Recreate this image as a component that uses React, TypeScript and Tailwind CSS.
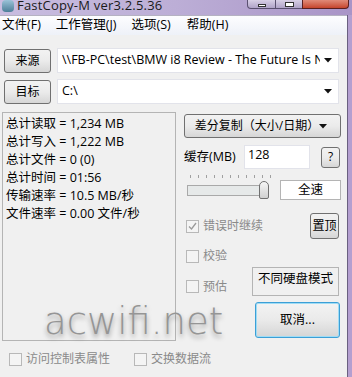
import React from 'react';

const font = "font-['Open_Sans','Noto_Sans_CJK_SC',sans-serif]";

function Arrow() {
    return (
        <svg width="8" height="5" viewBox="0 0 8 5" className="shrink-0">
            <path d="M0 0 H8 L4 4.5 Z" fill="#111" />
        </svg>
    );
}

function Check({ label, checked = false, className = '' }: { label: string; checked?: boolean; className?: string }) {
    return (
        <div className={`flex items-center gap-[4px] text-[12px] text-[#8a8a8a] ${className}`}>
            <div className="w-[13px] h-[13px] shrink-0 border border-[#b8b8b8] bg-[#f4f4f4] flex items-center justify-center">
                {checked && (
                    <svg width="9" height="9" viewBox="0 0 9 9">
                        <path d="M1 4.5 L3.5 7 L8 1" stroke="#9a9a9a" strokeWidth="1.3" fill="none" />
                    </svg>
                )}
            </div>
            <span className="whitespace-nowrap">{label}</span>
        </div>
    );
}

const btn = 'shrink-0 border border-[#707070] rounded-[3px] bg-gradient-to-b from-[#f2f2f2] via-[#ebebeb] to-[#d6d6d6] flex items-center justify-center text-[12px] text-black';

const stats = [
    '总计读取 = 1,234 MB',
    '总计写入 = 1,222 MB',
    '总计文件 = 0 (0)',
    '总计时间 = 01:56',
    '传输速率 = 10.5 MB/秒',
    '文件速率 = 0.00 文件/秒',
];

export default function App() {
    return (
        <div className={`w-[352px] h-[377px] overflow-hidden flex flex-col bg-[#b7a6d2] relative ${font}`}>
            {/* title bar */}
            <div className="h-[15px] shrink-0 flex items-end relative bg-gradient-to-r from-[#c9bde0] via-[#bcaed6] to-[#a994c7]">
                <div className="w-[12px] h-[12px] ml-[2px] mb-[3px] rounded-sm bg-gradient-to-b from-[#9bc3d8] to-[#4d7f99]" />
                <span className="ml-[3px] text-[13px] leading-[15px] tracking-[0.2px] text-[#1a1a1a] -translate-y-[2px] whitespace-nowrap">FastCopy-M ver3.2.5.36</span>
                <div className="absolute top-0 left-[247px] flex h-[9px]">
                    <div className="w-[29px] border border-[#5a5070] border-t-0 rounded-bl-[4px] bg-gradient-to-b from-[#d8d0e6] to-[#b0a3c8] flex justify-center items-end pb-[1px]">
                        <div className="w-[8px] h-[3px] bg-white border border-[#333]" />
                    </div>
                    <div className="w-[26px] border-b border-[#5a5070] bg-gradient-to-b from-[#d8d0e6] to-[#b0a3c8] flex justify-center items-end pb-[1px]">
                        <div className="w-[9px] h-[5px] border border-[#333] bg-white" />
                    </div>
                    <div className="w-[47px] border border-[#5a2020] border-t-0 rounded-br-[4px] bg-gradient-to-b from-[#e08a78] to-[#c5442c]" />
                </div>
            </div>
            <div className="flex flex-1 min-h-0">
                <div className="w-[347px] shrink-0 flex flex-col bg-[#f0f0f0]">
                    {/* menu bar */}
                    <div className="h-[20px] shrink-0 bg-gradient-to-b from-[#fdfdff] to-[#eef1f8] border-t border-[#b5b2c2] flex items-center text-[12.5px] text-black">
                        <span className="ml-[2px]">文件(F)</span>
                        <span className="ml-[15px]">工作管理(J)</span>
                        <span className="ml-[15px]">选项(S)</span>
                        <span className="ml-[16px]">帮助(H)</span>
                    </div>
                    {/* path rows */}
                    <div className="flex flex-col gap-[6px] mt-[13px] pl-[4px] pr-[8px]">
                        <div className="flex items-center gap-[6px]">
                            <div className={`${btn} w-[47px] h-[24px]`}>来源</div>
                            <div className="flex-1 min-w-0 h-[25px] bg-white border border-[#e2e3ea] flex items-center pl-[4px] pr-[6px] gap-[4px]">
                                <span className="flex-1 overflow-hidden whitespace-nowrap text-[12.5px] text-black">\\FB-PC\test\BMW i8 Review - The Future Is Now</span>
                                <Arrow />
                            </div>
                        </div>
                        <div className="flex items-center gap-[6px]">
                            <div className={`${btn} w-[47px] h-[24px]`}>目标</div>
                            <div className="flex-1 min-w-0 h-[25px] bg-white border border-[#e2e3ea] flex items-center pl-[4px] pr-[6px] gap-[4px]">
                                <span className="flex-1 overflow-hidden whitespace-nowrap text-[12.5px] text-black">C:\</span>
                                <Arrow />
                            </div>
                        </div>
                    </div>
                    {/* main */}
                    <div className="flex mt-[8px] pl-[2px]">
                        <div className="w-[174px] h-[229px] shrink-0 border border-[#b4b4b4] pl-[3px] pt-[2px] flex flex-col text-[12.5px] leading-[18px] text-black">
                            {stats.map((s) => (
                                <span key={s}>{s}</span>
                            ))}
                        </div>
                        <div className="flex flex-col ml-[8px] w-[157px] shrink-0 pt-[2px]">
                            <div className={`${btn} h-[24px] justify-between pl-[3px] pr-[6px] text-[12.5px]`}>
                                <span className="whitespace-nowrap">差分复制（大小/日期）</span>
                                <Arrow />
                            </div>
                            <div className="flex items-center mt-[7px] h-[24px]">
                                <span className="text-[12.5px] w-[55px] shrink-0 whitespace-nowrap">缓存(MB)</span>
                                <div className="ml-[5px] w-[66px] h-[24px] shrink-0 bg-white border border-[#e2e3ea] text-[12.5px] pl-[3px] leading-[18px]">128</div>
                                <div className={`${btn} ml-[11px] w-[19px] h-[21px] text-[12px]`}>?</div>
                            </div>
                            {/* slider */}
                            <div className="flex items-start mt-[6px] h-[26px]">
                                <div className="flex flex-col w-[84px] ml-[3px] shrink-0">
                                    <div className="flex gap-[7px] pl-[3px] h-[4px]">
                                        {Array.from({ length: 11 }).map((_, i) => (
                                            <div key={i} className="w-[1px] h-[3px] bg-[#a0a0a0]" />
                                        ))}
                                    </div>
                                    <div className="flex items-end h-[20px]">
                                        <div className="w-[73px] h-[11px] mb-[3px] bg-[#e6e9e9] border border-[#a9a9a9] border-r-0 shrink-0" />
                                        <div className="w-[10px] h-[18px] shrink-0 -ml-[1px] border border-[#707070] rounded-t-[5px] rounded-b-[2px] bg-gradient-to-b from-[#f6f6f6] to-[#d0d0d0]" />
                                    </div>
                                </div>
                                <div className="ml-[9px] mt-[5px] w-[61px] h-[20px] shrink-0 border border-[#b4b4b4] bg-white text-[12.5px] flex items-center justify-center">全速</div>
                            </div>
                            <div className="flex items-center justify-between mt-[12px] h-[26px] pl-[2px]">
                                <Check label="错误时继续" checked />
                                <div className={`${btn} w-[29px] h-[26px] mr-[2px] text-[12.5px]`}>置顶</div>
                            </div>
                            <Check label="校验" className="mt-[8px] pl-[2px]" />
                            <div className="flex items-center justify-between mt-[2px] pl-[2px]">
                                <Check label="预估" className="mt-[10px]" />
                                <div className="w-[87px] h-[29px] shrink-0 border border-[#b4b4b4] bg-[#f0f0f0] text-[12.5px] flex justify-center pt-[2px] mr-[2px]">不同硬盘模式</div>
                            </div>
                            <div className="flex justify-end mt-[6px] pr-[1px]">
                                <div className="w-[85px] h-[36px] rounded-[3px] border border-[#3c9fd6] shadow-[inset_0_0_0_1px_#9fdcf5] bg-gradient-to-b from-[#f3f3f3] via-[#eaeaea] to-[#d5d5d5] flex items-center justify-center text-[12.5px]">取消...</div>
                            </div>
                        </div>
                    </div>
                    {/* bottom checks */}
                    <div className="flex items-center mt-[9px] pl-[9px]">
                        <Check label="访问控制表属性" />
                        <Check label="交换数据流" className="ml-[24px]" />
                    </div>
                </div>
                <div className="flex-1 border-l border-[#6a6080] bg-[#b49fd0]" />
            </div>
            {/* watermark */}
            <div className="absolute left-[44px] top-[302px] text-[37px] leading-[40px] text-[#959595] font-['DejaVu_Sans',sans-serif] font-extralight [text-shadow:0_3px_5px_rgba(0,0,0,0.4)] pointer-events-none">acwifi.net</div>
        </div>
    );
}
